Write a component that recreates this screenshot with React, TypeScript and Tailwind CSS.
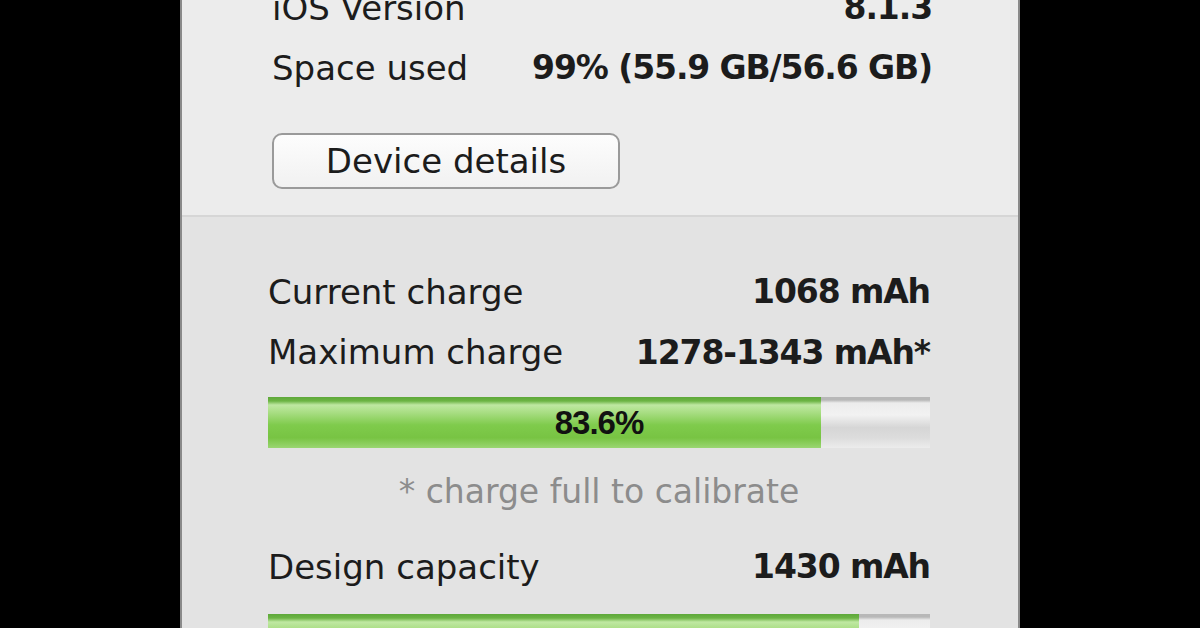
import React from 'react';

const FONT = '"DejaVu Sans", Verdana, sans-serif';

const Row: React.FC<{ label: string; value: string; h?: string }> = ({ label, value, h = 'h-[60px]' }) => (
  <div className={`flex items-center justify-between ${h} text-[34px] text-[#1c1c1c]`}>
    <span>{label}</span>
    <span className="font-bold tracking-[-1.1px] text-[33px]">{value}</span>
  </div>
);

const Bar: React.FC<{ pct: number; label: string }> = ({ pct, label }) => (
  <div className="relative h-[51px] w-full shrink-0 bg-[linear-gradient(#b8b8b8_0,#b8b8b8_3px,#ececec_6px,#f2f2f2_35%,#d6d6d6_60%,#dcdcdc_80%,#ececec_100%)]">
    <div
      className="absolute left-0 top-0 h-full bg-[linear-gradient(#5ea83a_0,#6cb444_4px,#bfe8a2_8px,#a9de84_30%,#7fcb4c_55%,#78c443_80%,#9ad672_100%)]"
      style={{ width: `${pct}%` }}
    />
    <div
      className="absolute inset-0 flex items-center justify-center text-[33px] font-bold text-[#111] tracking-[-1px]"
      style={{ fontFamily: '"Liberation Sans", Arial, sans-serif' }}
    >
      {label}
    </div>
  </div>
);

export default function App() {
  return (
    <div className="w-[1200px] h-[628px] bg-black overflow-hidden flex justify-center" style={{ fontFamily: FONT }}>
      <div className="w-[840px] h-full flex flex-col border-x-2 border-[#8a8a8a] overflow-hidden">
        {/* Device section */}
        <div className="h-[215px] shrink-0 bg-[#ececec] pl-[90px] pr-[86px] overflow-hidden">
          <div className="-mt-[22px]">
            <Row label="iOS Version" value="8.1.3" />
            <Row label="Space used" value="99% (55.9 GB/56.6 GB)" />
          </div>
          <button className="mt-[35px] w-[348px] h-[56px] rounded-[10px] border-2 border-[#9a9a9a] bg-[linear-gradient(#fdfdfd,#f1f1f1)] text-[34px] text-[#1c1c1c] flex items-center justify-center">
            Device details
          </button>
        </div>

        {/* Battery section */}
        <div className="flex-1 min-h-0 bg-[#e3e3e3] border-t-2 border-[#d6d6d6] pl-[86px] pr-[88px] pt-[45px]">
          <Row label="Current charge" value="1068 mAh" />
          <Row label="Maximum charge" value="1278-1343 mAh*" h="h-[61px]" />
          <div className="mt-[14px]">
            <Bar pct={83.6} label="83.6%" />
          </div>
          <div className="mt-[14px] h-[60px] flex items-center justify-center text-[33px] text-[#8c8c8c]">
            * charge full to calibrate
          </div>
          <div className="mt-[15px]">
            <Row label="Design capacity" value="1430 mAh" />
          </div>
          <div className="mt-[17px]">
            <Bar pct={89.2} label="89.4%" />
          </div>
        </div>
      </div>
    </div>
  );
}
